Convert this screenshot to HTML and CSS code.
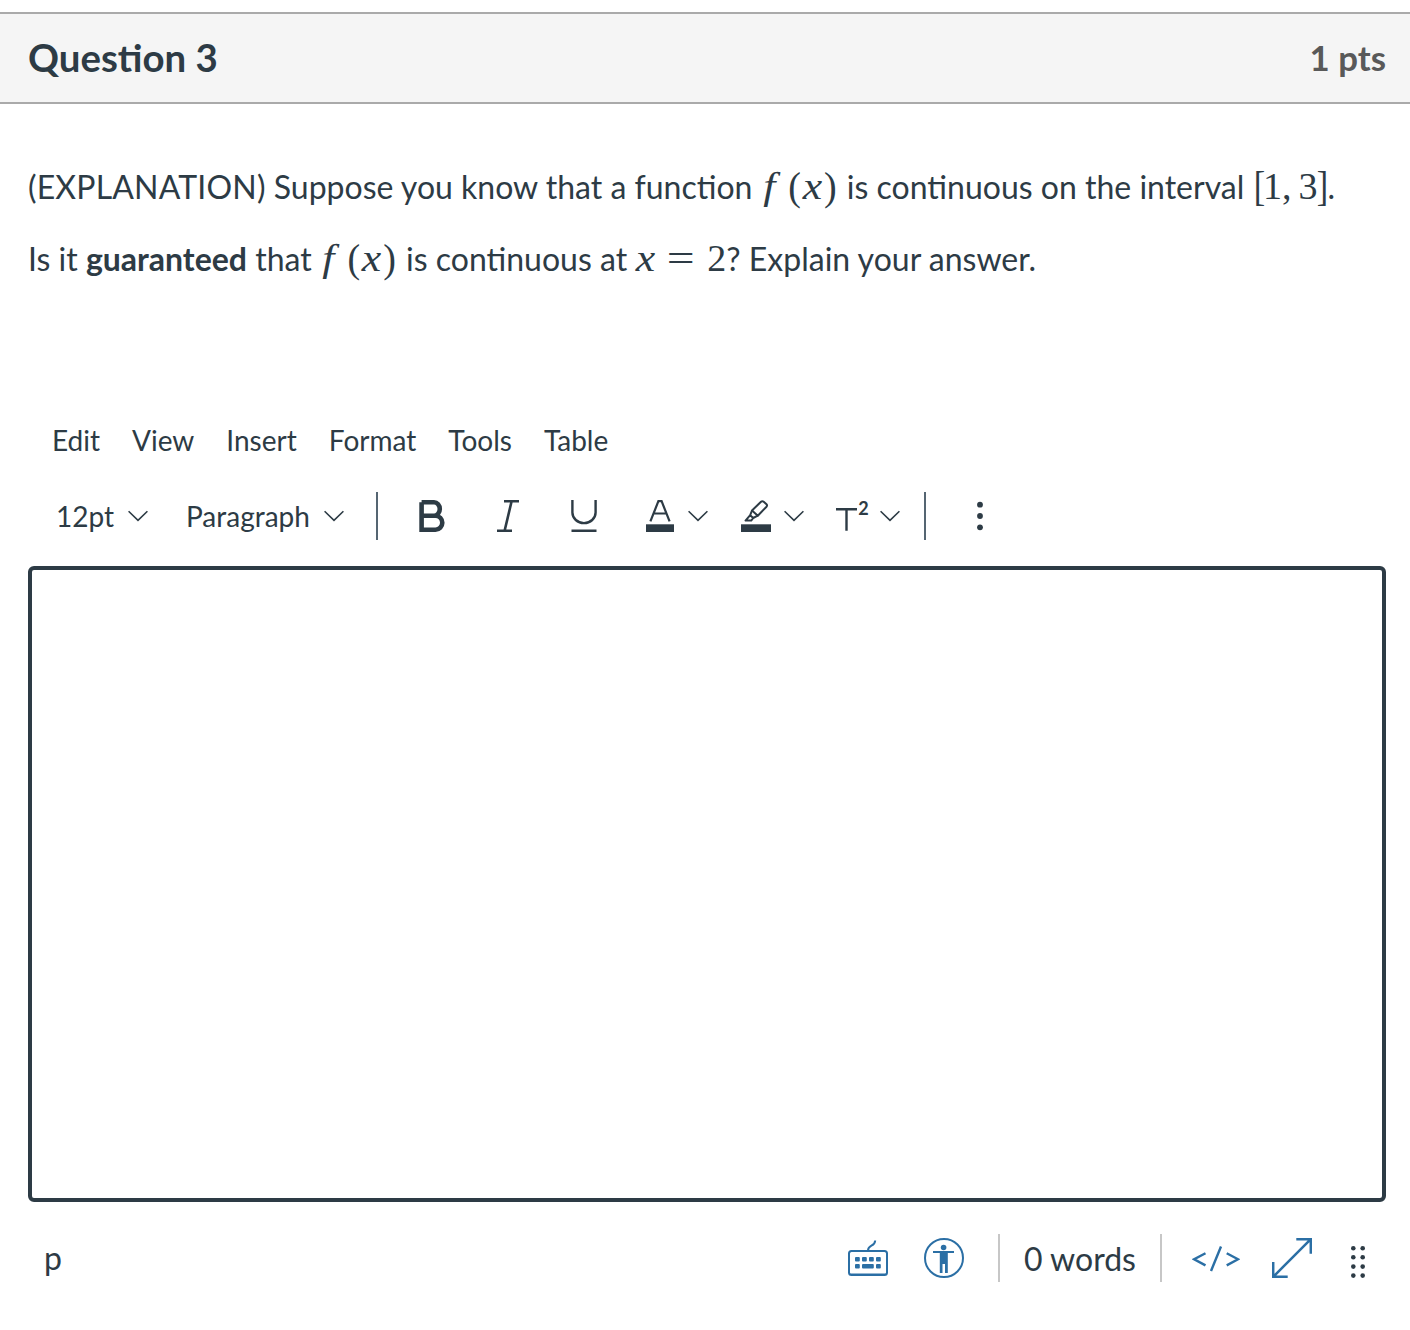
FILE: index.html
```
<!DOCTYPE html>
<html lang="en">
<head>
    <meta charset="UTF-8">
    <meta name="viewport" content="width=device-width, initial-scale=1.0">
    <title>Question 3</title>
    <link rel="stylesheet" href="styles.css">
</head>
<body>

<div class="question">
    <div class="question-header">
        <h1>Question 3</h1>
        <span class="points">1 pts</span>
    </div>

    <div class="question-text">
        <p><span class="label">(EXPLANATION)</span> Suppose you know that a function <span class="math math-fx"><i class="func">f</i><span class="paren">(</span><i class="var">x</i><span class="paren">)</span></span> is continuous on the interval <span class="math math-interval"><span class="bracket open">[</span><span>1</span><span class="comma">,</span><span>3</span><span class="bracket">]</span></span>.</p>
        <p>Is it <strong>guaranteed</strong> that <span class="math math-fx"><i class="func">f</i><span class="paren">(</span><i class="var">x</i><span class="paren">)</span></span> is continuous at <span class="math math-eq"><i class="var">x</i><span class="equals">=</span><span>2</span></span>? Explain your answer.</p>
    </div>

    <div class="menubar">
        <span>Edit</span>
        <span>View</span>
        <span>Insert</span>
        <span>Format</span>
        <span>Tools</span>
        <span>Table</span>
    </div>

    <div class="toolbar">
        <div class="tool size">
            <span>12pt</span>
            <svg class="chevron" viewBox="0 0 20 12"><path d="M0.6 1.2L10 10.4L19.4 1.2"/></svg>
        </div>
        <div class="tool block">
            <span>Paragraph</span>
            <svg class="chevron" viewBox="0 0 20 12"><path d="M0.6 1.2L10 10.4L19.4 1.2"/></svg>
        </div>
        <div class="divider"></div>
        <div class="tool bold">
            <svg width="26" height="32" viewBox="0 0 26 32"><path d="M2.6 2.3H15A5.8 6.7 0 0 1 15 15.7H2.6M15 15.7H16.5A6.8 7 0 0 1 16.5 29.7H2.6V2.3" fill="none" stroke="#2d3b45" stroke-width="4.6"/></svg>
        </div>
        <div class="tool italic">
            <svg width="22" height="32" viewBox="0 0 22 32"><path d="M7 1.3H22M0 30.7H15M14.6 1.3L7.6 30.7" fill="none" stroke="#2d3b45" stroke-width="2.6"/></svg>
        </div>
        <div class="tool underline">
            <svg width="26" height="32" viewBox="0 0 26 32"><path d="M1.4 0V12.5A11.6 10.6 0 0 0 24.6 12.5V0M0.5 30.7H25.5" fill="none" stroke="#2d3b45" stroke-width="2.4"/></svg>
        </div>
        <div class="tool color">
            <svg width="28" height="32" viewBox="0 0 28 32"><path d="M4.4 21.4L12.4 1.2H15.6L23.6 21.4M7.5 13.5H20.5" fill="none" stroke="#2d3b45" stroke-width="2.2"/><path d="M0 24.3H28V32H0z" fill="#2d3b45"/></svg>
            <svg class="chevron" viewBox="0 0 20 12"><path d="M0.6 1.2L10 10.4L19.4 1.2"/></svg>
        </div>
        <div class="tool highlight">
            <svg width="30" height="32" viewBox="0 0 30 32"><g fill="none" stroke="#2d3b45" stroke-width="2" stroke-linejoin="round"><path d="M11 10.5L20 1.8Q21.3 0.6 22.7 1.7L25.5 4.2Q26.6 5.3 25.5 6.7L16.8 15.7z"/><path d="M11 10.5L9.2 15.2L12.2 18L16.8 15.7M9.2 15.2L4.5 20.6H10.2L12.2 18"/></g><path d="M0 24.3H30V32H0z" fill="#2d3b45"/></svg>
            <svg class="chevron" viewBox="0 0 20 12"><path d="M0.6 1.2L10 10.4L19.4 1.2"/></svg>
        </div>
        <div class="tool script">
            <svg class="sup-icon" width="34" height="32" viewBox="0 0 34 32"><path d="M0 9.2H21M10.5 9.2V30.7" fill="none" stroke="#2d3b45" stroke-width="2.4"/><text x="22.2" y="14.5" class="sup">2</text></svg>
            <svg class="chevron" viewBox="0 0 20 12"><path d="M0.6 1.2L10 10.4L19.4 1.2"/></svg>
        </div>
        <div class="divider"></div>
        <div class="tool more">
            <svg width="8" height="32" viewBox="0 0 8 32" fill="#2d3b45"><circle cx="4" cy="4.7" r="2.9"/><circle cx="4" cy="16" r="2.9"/><circle cx="4" cy="27.3" r="2.9"/></svg>
        </div>
    </div>

    <div class="editor" contenteditable="true"></div>

    <div class="statusbar">
        <span class="path">p</span>
        <svg class="keyboard" width="40" height="40" viewBox="0 0 40 40"><g fill="none" stroke="#2b6fa5" stroke-width="2"><rect x="1" y="13" width="38" height="24" rx="2.5"/><path d="M20 12.5C20 6.5 27 9 27.2 2.5"/></g><path d="M1 36H39" stroke="#2b6fa5" stroke-width="1"/><g fill="#2b6fa5"><rect x="7" y="19" width="4.8" height="4.5" rx="1"/><rect x="14" y="19" width="4.8" height="4.5" rx="1"/><rect x="21" y="19" width="4.8" height="4.5" rx="1"/><rect x="28" y="19" width="4.8" height="4.5" rx="1"/><rect x="7" y="26" width="4.8" height="4.5" rx="1"/><rect x="14" y="26" width="11.8" height="4.5" rx="1"/><rect x="28" y="26" width="4.8" height="4.5" rx="1"/></g></svg>
        <svg class="a11y" width="40" height="40" viewBox="0 0 40 40"><circle cx="20" cy="20" r="19" fill="none" stroke="#2b6fa5" stroke-width="2"/><circle cx="19.6" cy="9.5" r="2.8" fill="#2b6fa5"/><path d="M9 13H30V15H23.8V35H21V26H18.5V35H15.8V15H9z" fill="#2b6fa5"/></svg>
        <div class="divider light"></div>
        <span class="words">0 words</span>
        <div class="divider light"></div>
        <svg class="code" width="48" height="40" viewBox="0 0 48 40"><path d="M13.5 15.2L2.2 21.3L13.5 27.4M34.7 15.2L46 21.3L34.7 27.4M29 8.5L19 33" fill="none" stroke="#2b6fa5" stroke-width="2.4"/></svg>
        <svg class="expand" width="40" height="40" viewBox="0 0 40 40"><path d="M24.3 1.2H38.8V15.7M1.2 24V38.8H15.7M1.2 38.8L38.8 1.2" fill="none" stroke="#2b6fa5" stroke-width="2.5"/></svg>
        <svg class="drag" width="16" height="40" viewBox="0 0 16 40" fill="#2d3b45"><circle cx="3.3" cy="10.3" r="2.3"/><circle cx="12.7" cy="10.3" r="2.3"/><circle cx="3.3" cy="19.3" r="2.3"/><circle cx="12.7" cy="19.3" r="2.3"/><circle cx="3.3" cy="28.6" r="2.3"/><circle cx="12.7" cy="28.6" r="2.3"/><circle cx="3.3" cy="37.6" r="2.3"/><circle cx="12.7" cy="37.6" r="2.3"/></svg>
    </div>
</div>

</body>
</html>
```
FILE: styles.css
```
body {
    margin: 0;
    background-color: #fff;
    color: #2d3b45;
    font-family: Lato, sans-serif;
    font-size: 32px;
}
.question {
    padding-top: 12px;
}
.question-header {
    display: flex;
    align-items: center;
    justify-content: space-between;
    box-sizing: border-box;
    height: 92px;
    padding: 0 24px 2px 28px;
    background-color: #f5f5f5;
    border-top: 2px solid #aaa;
    border-bottom: 2px solid #aaa;
}
.question-header h1 {
    margin: 0;
    font-size: 38.4px;
    font-weight: 700;
}
.points {
    color: #595959;
    font-size: 34.8px;
    font-weight: 700;
}
.question-text {
    padding: 47px 28px 0;
    height: 249px;
}
.question-text p {
    margin: 0;
    height: 72px;
    line-height: 72px;
    white-space: nowrap;
}
.label {
    letter-spacing: 0.17px;
}
.math {
    display: inline-flex;
    align-items: baseline;
    justify-content: space-between;
    font-family: "Liberation Serif", serif;
    font-size: 38px;
    line-height: 40px;
}
.math-fx {
    width: 74px;
    margin: 0 2px;
}
.func {
    margin-left: 1px;
    margin-right: 11px;
    transform: scaleX(1.15);
}
.var {
    transform: scaleX(1.15);
}
.paren {
    transform: scaleY(1.06);
}
.math-interval {
    justify-content: flex-start;
    width: 71px;
    margin: 0 3px 0 1px;
}
.bracket {
    transform: scale(0.9, 1.1);
}
.open {
    margin-right: -3px;
}
.comma {
    margin-right: 7px;
}
.bracket:last-child {
    margin-left: -2px;
}
.math-eq {
    width: 91px;
}
.math-eq .var {
    margin-left: 2px;
}
.equals {
    transform: scaleX(1.3);
}
.menubar {
    display: flex;
    align-items: center;
    gap: 32px;
    box-sizing: border-box;
    height: 80px;
    padding: 0 0 1px 52px;
    font-size: 28px;
}
.toolbar {
    display: flex;
    align-items: center;
    height: 72px;
    padding-left: 56px;
    font-size: 28px;
}
.tool {
    display: flex;
    align-items: center;
    justify-content: space-between;
}
.chevron {
    width: 20px;
    height: 12px;
    fill: none;
    stroke: #2d3b45;
    stroke-width: 1.6;
}
.size {
    width: 92px;
    margin-right: 38px;
}
.block {
    width: 158px;
    margin-right: 32px;
}
.size span,
.block span {
    margin-bottom: 1px;
}
.divider {
    width: 2px;
    height: 48px;
    background-color: #556572;
}
.bold {
    margin-left: 41px;
}
.italic {
    margin-left: 52px;
}
.underline {
    margin-left: 52px;
}
.color {
    width: 62px;
    margin-left: 49px;
}
.highlight {
    width: 63px;
    margin-left: 33px;
}
.script {
    width: 64px;
    margin: 0 24px 0 32px;
}
.sup-icon {
    overflow: visible;
}
.sup {
    font-size: 18px;
    font-weight: 700;
    fill: #2d3b45;
}
.more {
    margin-left: 50px;
}
.editor {
    box-sizing: border-box;
    height: 636px;
    margin: 14px 24px 0 28px;
    border: 4px solid #2d3b45;
    border-radius: 6px;
    outline: none;
}
.statusbar {
    display: flex;
    align-items: center;
    height: 48px;
    margin-top: 32px;
    padding: 0 44px;
}
.path {
    margin-right: auto;
    margin-bottom: 2px;
    font-size: 32px;
}
.a11y {
    margin: 0 34px 0 36px;
}
.light {
    background-color: #c7c7c7;
}
.words {
    width: 112px;
    margin: 0 24px;
    white-space: nowrap;
}
.code {
    margin-left: 30px;
}
.expand {
    margin: 0 38px 0 32px;
}
```
